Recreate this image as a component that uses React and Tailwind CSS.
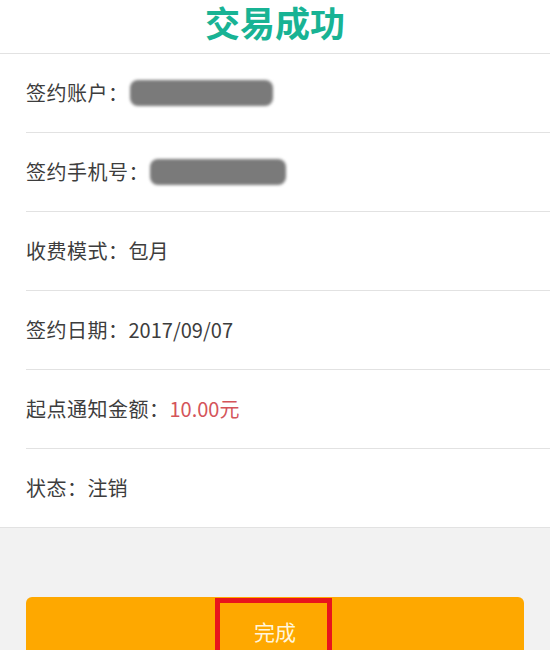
import React from 'react';

const rows = [
    { label: '签约账户：', blur: 'w-[143px]' },
    { label: '签约手机号：', blur: 'w-[136px]' },
    { label: '收费模式：', value: '包月' },
    { label: '签约日期：', value: '2017/09/07' },
    { label: '起点通知金额：', value: '10.00元', red: true },
    { label: '状态：', value: '注销' },
];

function App() {
    return (
        <div className="w-[550px] min-h-[650px] bg-[#f2f2f2] overflow-hidden font-['Noto_Sans_CJK_SC','Noto_Sans',sans-serif]">
            <div className="h-[54px] bg-white border-b border-[#e2e2e2] flex justify-center pt-[3px]">
                <h1 className="text-[35px] font-bold leading-[38px] text-[#18b394]">交易成功</h1>
            </div>

            <div className="bg-white border-b border-[#e2e2e2]">
                {rows.map((row, i) => (
                    <div
                        key={i}
                        className={
                            i < rows.length - 1
                                ? 'ml-[26px] h-[79px] border-b border-[#e2e2e2] flex items-center'
                                : 'ml-[26px] h-[78px] flex items-center'
                        }
                    >
                        <span className="text-[20px] text-[#3d3d3d] leading-none tracking-[0.5px]">{row.label}</span>
                        {row.blur ? (
                            <div className={`${row.blur} ml-[1px] h-[26px] rounded-[8px] bg-[#7a7a7a] blur-[1.5px]`}></div>
                        ) : (
                            <span
                                className={
                                    row.red
                                        ? 'text-[20px] leading-none text-[#d4545a]'
                                        : 'text-[20px] leading-none text-[#3d3d3d]'
                                }
                            >
                                {row.value}
                            </span>
                        )}
                    </div>
                ))}
            </div>

            <div className="pt-[69px] px-[26px]">
                <div className="relative h-[60px] rounded-[6px] bg-[#fea800] flex justify-center pt-[23px]">
                    <span className="text-[21px] leading-[22px] text-[#fff6dc]">完成</span>
                    <div className="absolute left-[189px] top-[1px] w-[117px] h-[70px] border-[5px] border-[#e8141c]"></div>
                </div>
            </div>
        </div>
    );
}

export default App;
